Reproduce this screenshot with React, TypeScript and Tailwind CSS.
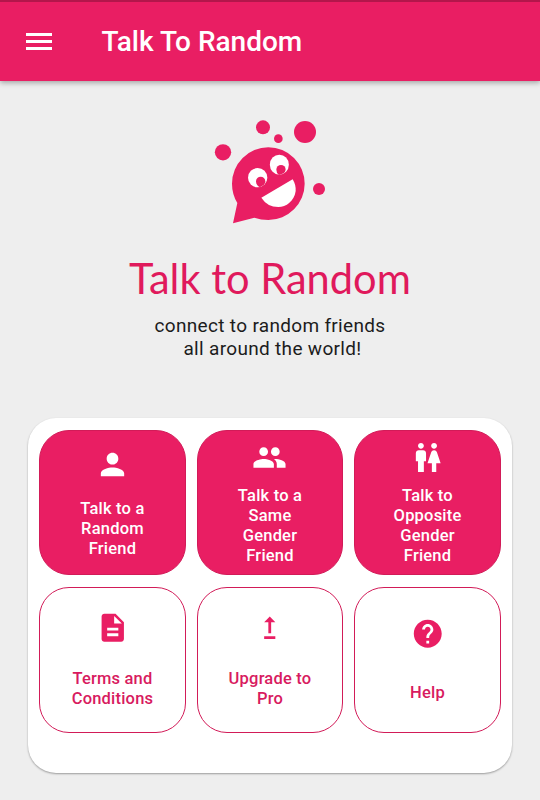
import React from "react";

const icons = {
  person:
    "M12 12c2.21 0 4-1.79 4-4s-1.79-4-4-4-4 1.79-4 4 1.79 4 4 4zm0 2c-2.67 0-8 1.34-8 4v2h16v-2c0-2.66-5.33-4-8-4z",
  group:
    "M16 11c1.66 0 2.99-1.34 2.99-3S17.66 5 16 5c-1.66 0-3 1.34-3 3s1.34 3 3 3zm-8 0c1.66 0 2.99-1.34 2.99-3S9.66 5 8 5C6.34 5 5 6.34 5 8s1.34 3 3 3zm0 2c-2.33 0-7 1.17-7 3.5V19h14v-2.5c0-2.33-4.67-3.5-7-3.5zm8 0c-.29 0-.62.02-.97.05 1.16.84 1.97 1.97 1.97 3.45V19h6v-2.5c0-2.33-4.67-3.5-7-3.5z",
  wc: "M5.5 22v-7.5H4V9c0-1.1.9-2 2-2h3c1.1 0 2 .9 2 2v5.5H9.5V22h-4zM18 22v-6h3l-2.54-7.63C18.18 7.55 17.42 7 16.56 7h-.12c-.86 0-1.63.55-1.9 1.37L12 16h3v6h3zM7.5 6c1.11 0 2-.89 2-2s-.89-2-2-2-2 .89-2 2 .89 2 2 2zm9 0c1.11 0 2-.89 2-2s-.89-2-2-2-2 .89-2 2 .89 2 2 2z",
  description:
    "M14 2H6c-1.1 0-1.99.9-1.99 2L4 20c0 1.1.89 2 1.99 2H18c1.1 0 2-.9 2-2V8l-6-6zm2 16H8v-2h8v2zm0-4H8v-2h8v2zm-3-5V3.500L18.500 9H13z",
  upgrade: "M16 18v2H8v-2h8zM11 7.990V16h2V7.990h3L12 4 8 7.990h3z",
  help: "M12 2C6.480 2 2 6.480 2 12s4.480 10 10 10 10-4.480 10-10S17.520 2 12 2zm1 17h-2v-2h2v2zm2.070-7.750l-.9.920C13.450 12.900 13 13.500 13 15h-2v-.5c0-1.100.45-2.100 1.170-2.830l1.240-1.260c.37-.36.59-.86.59-1.410 0-1.100-.9-2-2-2s-2 .9-2 2H8c0-2.210 1.790-4 4-4s4 1.790 4 4c0 .88-.36 1.680-.93 2.250z",
};

interface TileProps {
  icon: keyof typeof icons;
  lines: string[];
  filled?: boolean;
  spacing: string;
}

function Tile({ icon, lines, filled, spacing }: TileProps) {
  return (
    <button
      className={`flex h-[145.8px] flex-col items-center rounded-[30px] border border-[#d21b58] text-[16.5px] font-medium leading-[19.7px] tracking-[0.2px] ${
        filled ? "bg-[#e91e63] text-white" : "bg-white text-[#d81b60]"
      } ${spacing}`}
    >
      <svg
        viewBox="0 0 24 24"
        className={filled ? "size-[35px] shrink-0" : "size-[33.5px] shrink-0 text-[#e91e63]"}
        fill="currentColor"
      >
        <path d={icons[icon]} />
      </svg>
      <span className="flex flex-col items-center">
        {lines.map((line) => (
          <span key={line}>{line}</span>
        ))}
      </span>
    </button>
  );
}

function Mascot() {
  return (
    <svg width="130" height="125" viewBox="0 0 390 375" className="mx-auto block">
      <g fill="#e91e63">
        <circle cx="54" cy="127" r="24.5" />
        <circle cx="174" cy="52" r="21" />
        <circle cx="220" cy="86" r="13" />
        <circle cx="300" cy="66" r="33" />
        <circle cx="342" cy="237" r="18" />
        <path d="M97 279 L84 340 L148 323 Q168 330 190 330 A109 109 0 1 0 81 221 Q81 252 97 279Z" />
      </g>
      <g fill="#fff">
        <circle cx="158" cy="203" r="29" />
        <ellipse cx="223" cy="164" rx="28.5" ry="30" />
        <path d="M169 263 L263 208 Q273 224 272 243 C268 274 243 291 220 291 Q187 291 169 263Z" />
      </g>
      <g fill="#e91e63">
        <path d="M153 214a14 14 0 0 1 28 0q0 6-4 10l-12 8q-12-6-12-18z" />
        <path d="M214 179a14 14 0 0 1 28 0q-1 6-6 11l-14 5q-8-6-8-16z" />
      </g>
    </svg>
  );
}

export default function App() {
  return (
    <div className="h-[800px] w-[540px] overflow-hidden bg-[#eeeeee] font-['Roboto',sans-serif]">
      <header className="flex h-[80.5px] items-center border-t-2 border-[#b3164b] bg-[#e91e63] pl-[26px] shadow-[0_2px_5px_rgba(0,0,0,0.3)]">
        <button aria-label="Menu" className="flex w-[26px] flex-col gap-[4px]">
          <span className="h-[3px] bg-white" />
          <span className="h-[3px] bg-white" />
          <span className="h-[3px] bg-white" />
        </button>
        <h1 className="ml-[49.5px] whitespace-nowrap pt-[2px] text-[28px] font-medium leading-[36px] text-white">
          Talk To Random
        </h1>
      </header>

      <section className="h-[337.5px] pt-[29.5px] text-center">
        <Mascot />
        <h2 className="mt-[17px] font-['Lato',sans-serif] text-[41.6px] leading-[52px] text-[#e0195c]">
          Talk to Random
        </h2>
        <p className="mt-[11px] text-[19px] leading-[22.5px] tracking-[0.32px] text-[#1c1c1c]">
          connect to random friends
          <br />
          <span className="pl-[5px]">all around the world!</span>
        </p>
      </section>

      <main className="mx-[28px] h-[354.5px] rounded-[28px] bg-white px-[11.4px] pt-[11.6px] shadow-[0_1px_2px_rgba(0,0,0,0.35)]">
        <div className="grid grid-cols-3 gap-[11.4px]">
          <Tile icon="person" lines={["Talk to a", "Random", "Friend"]} filled spacing="gap-[17.5px] pt-[16px]" />
          <Tile icon="group" lines={["Talk to a", "Same", "Gender", "Friend"]} filled spacing="gap-[11px] pt-[9.8px]" />
          <Tile icon="wc" lines={["Talk to", "Opposite", "Gender", "Friend"]} filled spacing="gap-[11px] pt-[9.8px]" />
          <Tile icon="description" lines={["Terms and", "Conditions"]} spacing="gap-[24.6px] pt-[23.6px]" />
          <Tile icon="upgrade" lines={["Upgrade to", "Pro"]} spacing="gap-[24.6px] pt-[23.6px]" />
          <Tile icon="help" lines={["Help"]} spacing="gap-[31.8px] pt-[29.6px]" />
        </div>
      </main>
    </div>
  );
}
